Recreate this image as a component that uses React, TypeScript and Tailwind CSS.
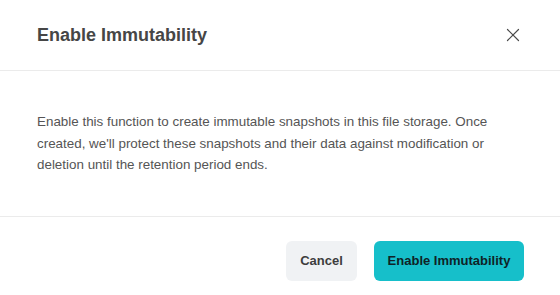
import { X } from "lucide-react";

const font = { fontFamily: '"Liberation Sans", Arial, sans-serif' };

export default function App() {
  return (
    <div className="h-[295px] w-[560px] overflow-hidden bg-white" style={font}>
      <header className="flex h-[71px] items-center justify-between border-b border-[#ebebeb] pl-[37px] pr-[35px]">
        <h1 className="text-[18px] font-bold text-[#464646]">Enable Immutability</h1>
        <button type="button" className="flex h-6 w-6 items-center justify-center text-[#4a4a4a]">
          <X size={22} strokeWidth={1.3} />
        </button>
      </header>

      <div className="h-[146px] border-b border-[#ebebeb] px-[37px] pt-[40px]">
        <p className="text-[13.4px] leading-[21.5px] text-[#555]">
          Enable this function to create immutable snapshots in this file storage. Once
          <br />
          created, we'll protect these snapshots and their data against modification or
          <br />
          deletion until the retention period ends.
        </p>
      </div>

      <footer className="flex justify-end gap-[17px] pr-[36px] pt-[24px]">
        <button
          type="button"
          className="h-10 w-[71px] rounded-md bg-[#f0f2f4] text-[13px] font-bold text-[#3d3d3d]"
        >
          Cancel
        </button>
        <button
          type="button"
          className="h-10 w-[150px] rounded-md bg-[#16bfca] text-[13px] font-bold text-[#0f2326]"
        >
          Enable Immutability
        </button>
      </footer>
    </div>
  );
}
